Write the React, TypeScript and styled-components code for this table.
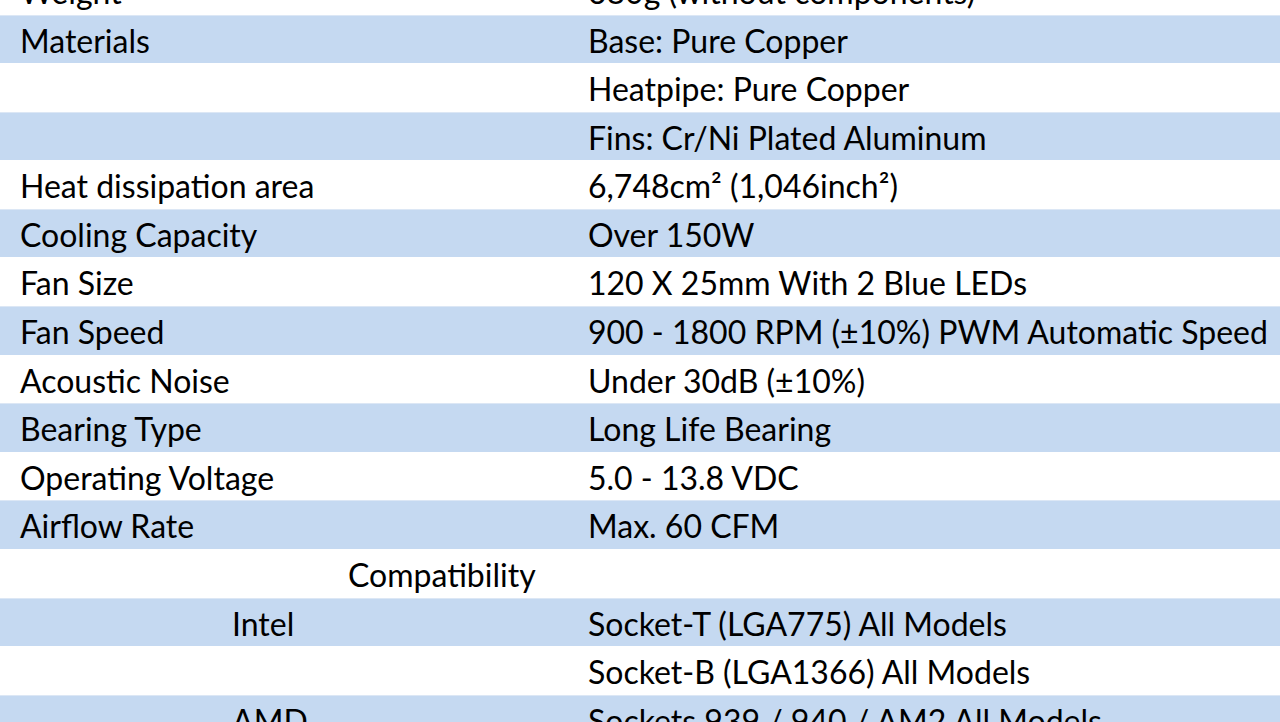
import React from 'react';
import styled, { createGlobalStyle } from 'styled-components';

const GlobalStyle = createGlobalStyle`
  html, body {
    margin: 0;
    padding: 0;
    background: #ffffff;
    overflow: hidden;
  }
`;

interface Spec {
  label?: string
  value?: string
  indent?: number
}

const specs: Spec[] = [
  { label: 'Weight', value: '680g (without components)' },
  { label: 'Materials', value: 'Base: Pure Copper' },
  { value: 'Heatpipe: Pure Copper' },
  { value: 'Fins: Cr/Ni Plated Aluminum' },
  { label: 'Heat dissipation area', value: '6,748cm² (1,046inch²)' },
  { label: 'Cooling Capacity', value: 'Over 150W' },
  { label: 'Fan Size', value: '120 X 25mm With 2 Blue LEDs' },
  { label: 'Fan Speed', value: '900 - 1800 RPM (±10%) PWM Automatic Speed' },
  { label: 'Acoustic Noise', value: 'Under 30dB (±10%)' },
  { label: 'Bearing Type', value: 'Long Life Bearing' },
  { label: 'Operating Voltage', value: '5.0 - 13.8 VDC' },
  { label: 'Airflow Rate', value: 'Max. 60 CFM' },
  { label: 'Compatibility', indent: 348 },
  { label: 'Intel', value: 'Socket-T (LGA775) All Models', indent: 232 },
  { value: 'Socket-B (LGA1366) All Models' },
  { label: 'AMD', value: 'Sockets 939 / 940 / AM2 All Models', indent: 232 },
];

const Table = styled.div`
  display: flex;
  flex-direction: column;
  margin-top: -34.1px;
  font-family: Lato, "Liberation Sans", sans-serif;
  font-size: 32px;
  color: #000000;
`;

const Row = styled.div<{ $shaded: boolean }>`
  display: grid;
  grid-template-columns: 568px 1fr;
  height: 48.6px;
  flex-shrink: 0;
  box-sizing: border-box;
  padding-top: 2px;
  background: ${p => (p.$shaded ? '#c5d9f1' : '#ffffff')};
  box-shadow: ${p => (p.$shaded ? 'inset 0 1px 0 #dce7f5' : 'none')};
`;

const Cell = styled.div<{ $indent?: number }>`
  padding-left: ${p => p.$indent ?? 20}px;
  line-height: 48.6px;
  white-space: nowrap;
`;

const App = () => (
  <>
    <GlobalStyle />
    <Table>
      {specs.map((s, i) => (
        <Row key={i} $shaded={i % 2 === 1}>
          <Cell $indent={s.indent}>{s.label}</Cell>
          <Cell>{s.value}</Cell>
        </Row>
      ))}
    </Table>
  </>
);

export default App;
